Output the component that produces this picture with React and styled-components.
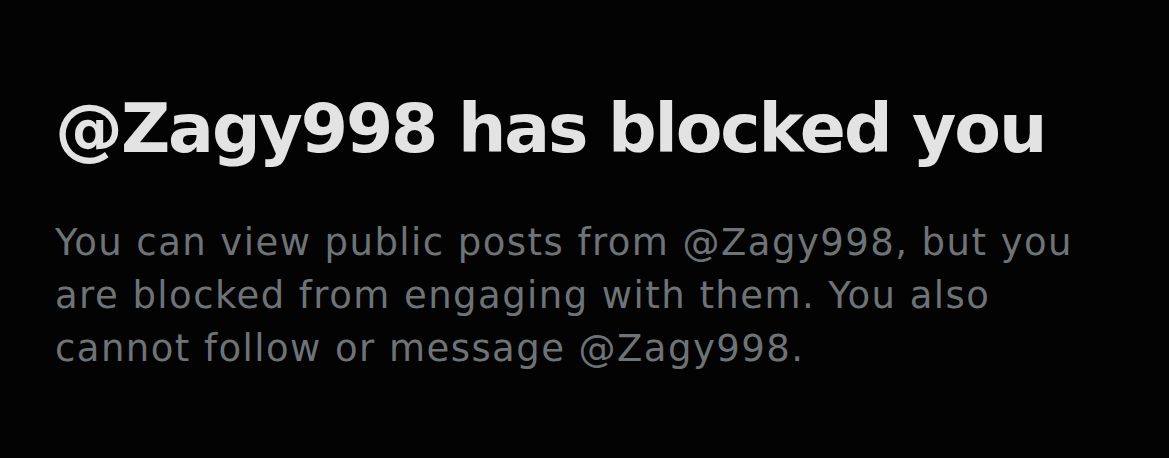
import React from "react";
import styled, { createGlobalStyle } from "styled-components";

const Global = createGlobalStyle`
  html, body { margin: 0; padding: 0; background: #000; }
  body { width: 1169px; height: 458px; overflow: hidden; }
`;

const Page = styled.main`
  width: 1169px;
  height: 458px;
  box-sizing: border-box;
  background: #030303;
  padding: 87px 40px 0 55px;
  display: flex;
  flex-direction: column;
  gap: 45px;
`;

const Title = styled.h1`
  margin: 0;
  font-family: "DejaVu Sans", Arial, sans-serif;
  font-weight: 700;
  font-size: 68px;
  line-height: 84px;
  letter-spacing: -2.1px;
  color: #e3e3e3;
`;

const Body = styled.p`
  margin: 0;
  font-family: "DejaVu Sans", Arial, sans-serif;
  font-size: 37px;
  line-height: 53px;
  letter-spacing: 1.45px;
  color: #6e7378;
  max-width: 1060px;
`;

export default function App() {
  return (
    <>
      <Global />
      <Page>
        <Title>@Zagy998 has blocked you</Title>
        <Body>
          You can view public posts from @Zagy998, but you are blocked from
          engaging with them. You also cannot follow or message @Zagy998.
        </Body>
      </Page>
    </>
  );
}
